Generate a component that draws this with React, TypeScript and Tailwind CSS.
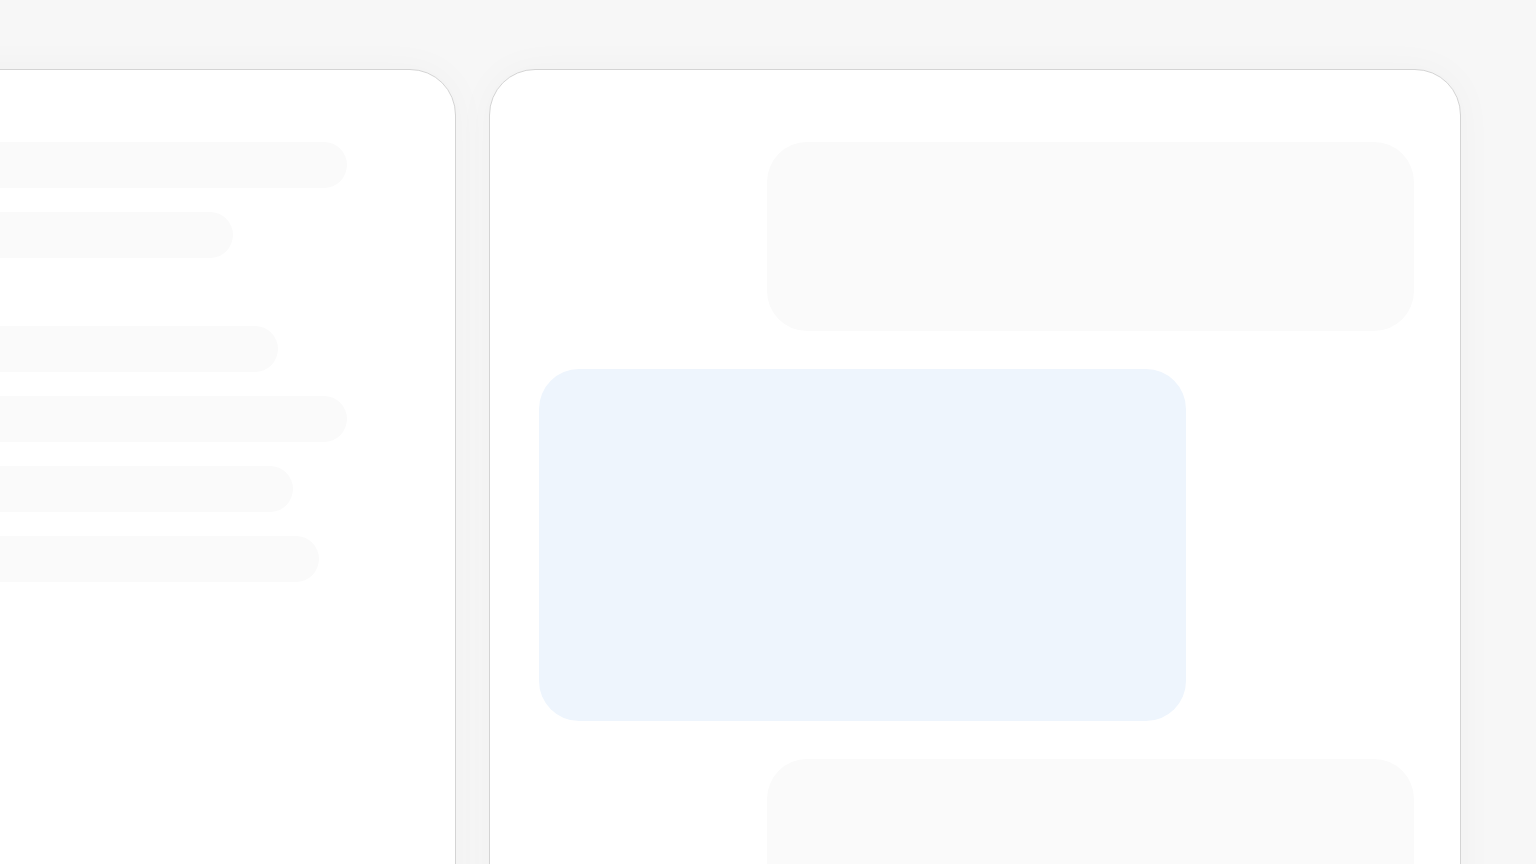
export default function App() {
  const bars = ["w-[396px]", "w-[282px]", "mt-[44px] w-[327px]", "w-[396px]", "w-[342px]", "w-[368px]"];
  return (
    <div className="h-[864px] w-[1536px] overflow-hidden bg-[#f7f7f7] font-['Inter',sans-serif]">
      <div className="flex gap-[33px] pt-[69px]">
        {/* left list panel */}
        <div className="ml-[-100px] h-[900px] w-[556px] shrink-0 rounded-[46px] border border-[#d4d4d4] bg-white pl-[50px] pt-[72px] shadow-[0_0_40px_rgba(0,0,0,0.03)]">
          <div className="flex flex-col gap-[24px]">
            {bars.map((b, i) => (
              <div key={i} className={`h-[46px] rounded-full bg-[#fafafa] ${b}`} />
            ))}
          </div>
        </div>

        {/* right conversation panel */}
        <div className="h-[900px] w-[972px] shrink-0 rounded-[46px] border border-[#d4d4d4] bg-white pl-[49px] pr-[46px] pt-[72px] shadow-[0_0_40px_rgba(0,0,0,0.03)]">
          <div className="flex flex-col gap-[38px]">
            <div className="ml-auto h-[189px] w-[647px] rounded-[40px] bg-[#fafafa]" />
            <div className="h-[352px] w-[647px] rounded-[40px] bg-[#eef5fd]" />
            <div className="ml-auto h-[189px] w-[647px] rounded-[40px] bg-[#fafafa]" />
          </div>
        </div>
      </div>
    </div>
  );
}
